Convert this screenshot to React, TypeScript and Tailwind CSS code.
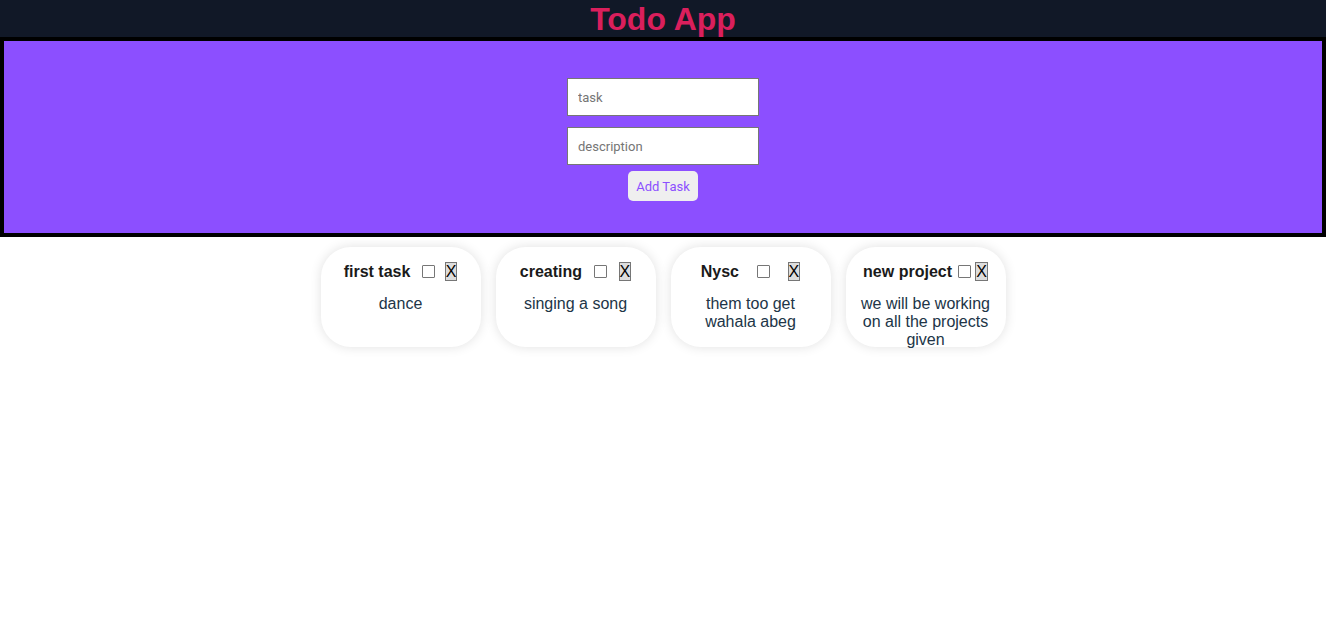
import { useState } from "react";

interface Task {
  title: string;
  description: string;
}

const tasks: Task[] = [
  { title: "first task", description: "dance" },
  { title: "creating", description: "singing a song" },
  { title: "Nysc", description: "them too get wahala abeg" },
  { title: "new project", description: "we will be working on all the projects given" },
];

function TaskCard({ task }: { task: Task }) {
  const [done, setDone] = useState(false);
  return (
    <div className="w-[160px] h-[100px] rounded-[30px] bg-white shadow-[0_0_12px_rgba(0,0,0,0.12)] px-[13px] pt-[15px] text-center">
      <div className="flex items-center justify-evenly px-[3px]">
        <h3 className="text-[16px] font-bold text-[#1a1a1a] leading-[19px]">{task.title}</h3>
        <input
          type="checkbox"
          checked={done}
          onChange={() => setDone(!done)}
          className="appearance-none m-[3px_3px_3px_4px] w-[13px] h-[13px] shrink-0 bg-white border border-[#767676] rounded-[1px] checked:bg-[#0075ff] checked:border-[#0075ff]"
        />
        <button className="shrink-0 bg-[#dddddd] border border-[#767676] text-[16px] leading-[17px] text-black px-0">
          X
        </button>
      </div>
      <p className="mt-[14px] text-[16px] leading-[18px] text-[#213547]">{task.description}</p>
    </div>
  );
}

export default function App() {
  return (
    <div className="min-h-[627px] bg-white font-['Liberation_Sans',Arial,sans-serif]">
      {/* header */}
      <header className="h-[37px] bg-[#111827] flex items-center justify-center">
        <h1 className="text-[32px] font-bold text-[#da1f5c] leading-none">Todo App</h1>
      </header>

      {/* form */}
      <section className="h-[200px] bg-[#8c4fff] border-4 border-black flex flex-col items-center pt-[37px]">
        <input
          placeholder="task"
          className="w-[192px] h-[38px] bg-white border border-[#767676] px-[10px] text-[13px] font-['Roboto',sans-serif] placeholder:text-[#757575] outline-none"
        />
        <input
          placeholder="description"
          className="mt-[11px] w-[192px] h-[38px] bg-white border border-[#767676] px-[10px] text-[13px] font-['Roboto',sans-serif] placeholder:text-[#757575] outline-none"
        />
        <button className="mt-[6px] w-[70px] h-[30px] pt-[1px] rounded-[5px] bg-[#efefef] text-[#8c4fff] text-[13px] font-['Roboto',sans-serif]">
          Add Task
        </button>
      </section>

      {/* task list */}
      <div className="mt-[10px] flex justify-center gap-[15px]">
        {tasks.map((t, i) => (
          <TaskCard key={i} task={t} />
        ))}
      </div>
    </div>
  );
}
